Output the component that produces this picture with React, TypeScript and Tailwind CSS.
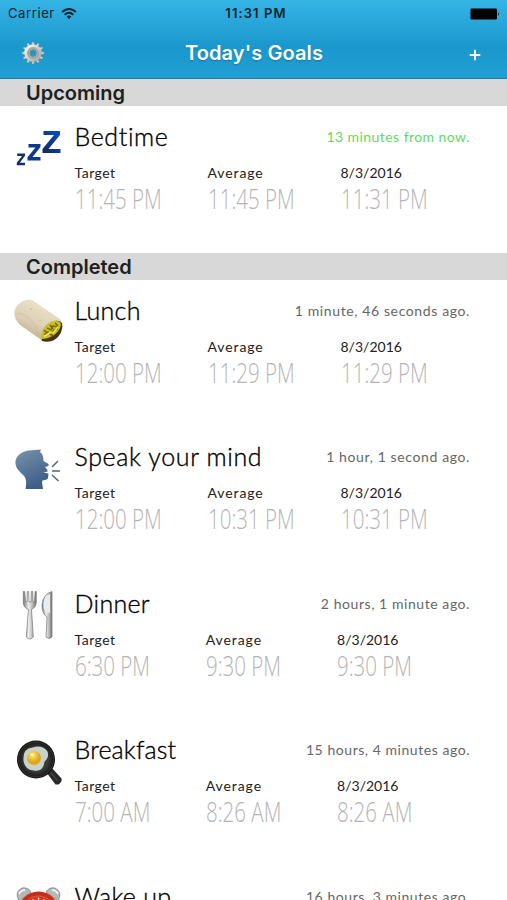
import React from 'react';

interface Goal {
  name: string;
  icon: React.ReactNode;
  when: string;
  upcoming?: boolean;
  narrow?: boolean;
  nameClass: string;
  whenClass: string;
  times: string[];
}

function GearIcon() {
  const teeth = Array.from({ length: 12 }, (_, i) => i * 30);
  return (
    <svg width="24" height="24" viewBox="0 0 24 24">
      <defs>
        <linearGradient id="gear" x1="0" y1="0" x2="1" y2="1">
          <stop offset="0" stopColor="#f3f3f1" />
          <stop offset="1" stopColor="#aaa9a7" />
        </linearGradient>
      </defs>
      <g fill="#d4d4d2" stroke="#77868c" strokeWidth="0.4">
        {teeth.map((angle) => (
          <path key={angle} d="M10.5 5 11.1.9H12.9L13.5 5Z" transform={`rotate(${angle} 12 12)`} />
        ))}
      </g>
      <circle cx="12" cy="12" r="6.2" fill="none" stroke="url(#gear)" strokeWidth="5" />
      <circle cx="12" cy="12" r="5" fill="none" stroke="#a4a4a3" strokeWidth="2" />
      <circle cx="12" cy="12" r="3" fill="#2597c7" stroke="#77878e" strokeWidth="0.7" />
    </svg>
  );
}

function WifiIcon() {
  return (
    <svg width="16" height="12" viewBox="0 0 16 12" fill="none" stroke="#07232f" strokeWidth="1.9">
      <path d="M1.2 4.2C5-.1 11-.1 14.8 4.2" />
      <path d="M3.7 6.8C6.2 4.1 9.8 4.1 12.3 6.8" />
      <path d="M5.7 8.6C7.1 7.2 8.9 7.2 10.3 8.6L8 11.2Z" fill="#07232f" stroke="none" />
    </svg>
  );
}

function BatteryIcon() {
  return (
    <svg width="30" height="12" viewBox="0 0 30 12">
      <rect x="0.5" y="0.5" width="26.5" height="11" rx="1.2" fill="#000" />
      <path d="M28 4Q29.8 6 28 8Z" fill="#000" />
    </svg>
  );
}

function SleepIcon() {
  return (
    <svg width="50" height="50" viewBox="0 0 50 50">
      <defs>
        <linearGradient id="zzz" x1="0" y1="1" x2="1" y2="0">
          <stop offset="0" stopColor="#12235c" />
          <stop offset="1" stopColor="#0751cf" />
        </linearGradient>
      </defs>
      <path d="M29.5 8H46V12L34.5 26H46.5V30H28.5V26L40 12H29.5Z" fill="url(#zzz)" />
      <path d="M14.5 21H26.5V24L18.5 34H26.5V37.5H13.5V34.3L21.5 24.5H14.5Z" fill="#10388f" />
      <path d="M3.2 30.5H11V32.7L5.8 39.8H11V42.3H2.8V39.7L8 32.9H3.2Z" fill="#152f6b" />
    </svg>
  );
}

function BurritoIcon() {
  return (
    <svg width="50" height="50" viewBox="0 0 50 50">
      <defs>
        <linearGradient id="wrap" x1="0.7" y1="0" x2="0.2" y2="1">
          <stop offset="0" stopColor="#efe5cf" />
          <stop offset="0.55" stopColor="#ddd0b5" />
          <stop offset="1" stopColor="#b3a280" />
        </linearGradient>
      </defs>
      <path d="M.5 14C2 7 10 2 18 3L46 22C52 31 41 46 29 44L6 28C2 24-.5 19 .5 14Z" fill="url(#wrap)" />
      <path d="M3 16C10 17 17 21 24 32" fill="none" stroke="#cbbd9f" strokeWidth="0.8" />
      <path d="M28 44C26 37 30 28 38 25Q44 22 48 26C50 35 42 48 28 44Z" fill="#46351b" />
      <path d="M27 42C26 35 31 27 39 24Q45 23 47 27C46 35 38 42 27 42Z" fill="#c0c529" />
      <path d="M30 38 34 35 37 38 40 33 44 32M33 31 37 33 39 29 43 30" fill="none" stroke="#667e16" strokeWidth="1.6" />
      <path d="M30 33 33 36M36 28 39 32M41 26 44 29M37 37 39 39" stroke="#b94322" strokeWidth="1.7" />
      <path d="M30 39.5 36 35.5 39 36 44 30" fill="none" stroke="#f1e83e" strokeWidth="1.6" />
      <circle cx="17" cy="12" r="0.7" fill="#b6a17d" />
      <circle cx="26" cy="23" r="0.6" fill="#b6a17d" />
    </svg>
  );
}

function SpeakingIcon() {
  return (
    <svg width="50" height="50" viewBox="0 0 50 50">
      <defs>
        <linearGradient id="head" x1="0" y1="0" x2="0.4" y2="1">
          <stop offset="0" stopColor="#7893ad" />
          <stop offset="1" stopColor="#3f5f88" />
        </linearGradient>
      </defs>
      <path
        d="M11.5 46C13 38 12 34 8 31C3 26 1 23 1.5 18C3 10 12 7 21 7L27 6.5L26 9C29 11 29.5 15 29.5 18L34.5 21V23L31 24L33.5 27V28.5L29.5 29.5L34.5 30.5L34 35C33 38 28 36 28 39L29 46Z"
        fill="url(#head)"
      />
      <path d="M38 24 44 18M38 28H46M38 32 44.5 38" stroke="#5a6570" strokeWidth="1.5" />
    </svg>
  );
}

function CutleryIcon() {
  return (
    <svg width="50" height="56" viewBox="0 0 50 56">
      <defs>
        <linearGradient id="steel" x1="0" y1="0" x2="1" y2="0">
          <stop offset="0" stopColor="#777" />
          <stop offset="0.4" stopColor="#eee" />
          <stop offset="0.7" stopColor="#bbb" />
          <stop offset="1" stopColor="#747474" />
        </linearGradient>
      </defs>
      <g transform="translate(0 -4)">
        <path
          d="M9.3 5.5H10.7L11.6 16H13L13.3 5.5H14.6L15 16H17L17.3 5.5H18.7L19.1 16H20.4L21.2 5.5H22.3V16Q22 21.5 17.5 23.5L19.3 51Q16 55 12.3 51L14.4 23.5Q9.3 21.5 9.3 16Z"
          fill="url(#steel)" stroke="#777" strokeWidth="0.7"
        />
        <path d="M38 5.5V51Q35 54 32 51L33 31Q28 28 28 19Q29 8 38 5.5Z" fill="url(#steel)" stroke="#777" strokeWidth="0.7" />
        <path d="M36 8V27Q29 27 29.5 18Q30 10 36 8Z" fill="#e8edef" />
      </g>
    </svg>
  );
}

function EggIcon() {
  return (
    <svg width="50" height="50" viewBox="0 0 50 50">
      <defs>
        <radialGradient id="pan">
          <stop offset="0.6" stopColor="#3c3c3b" />
          <stop offset="1" stopColor="#111" />
        </radialGradient>
        <radialGradient id="yolk" cx="0.4" cy="0.3">
          <stop offset="0" stopColor="#ffed79" />
          <stop offset="1" stopColor="#dea619" />
        </radialGradient>
      </defs>
      <g transform="translate(-0.5 1.5)">
        <path d="M33 35 38 30 48 41Q49 44 45 47L42 47Z" fill="#292929" />
        <path d="M37 35 44 43" stroke="#484848" strokeWidth="1.2" />
        <circle cx="22.5" cy="22" r="19" fill="url(#pan)" />
        <circle cx="22.5" cy="22" r="17.5" fill="none" stroke="#383836" strokeWidth="0.8" />
        <path d="M10 23Q9 11 19 10Q29 7 34 14Q36 20 31 24C30 32 26 34 20 33Q11 32 10 23Z" fill="#c9d1ca" />
        <circle cx="20.5" cy="20.5" r="7" fill="url(#yolk)" />
        <ellipse cx="18.5" cy="17" rx="2" ry="1.1" fill="#fff4aa" />
      </g>
    </svg>
  );
}

function AlarmIcon() {
  return (
    <svg width="50" height="50" viewBox="0 0 50 50">
      <g transform="translate(0 2)">
        <path d="M5 16Q0 7 8 3Q14 2 17 7ZM44 16Q49 7 41 3Q35 2 32 7Z" fill="#b7b9b8" stroke="#818484" strokeWidth="0.8" />
        <path d="M5 9Q7 5 11 5M44 9Q42 5 38 5" fill="none" stroke="#eee" strokeWidth="2" />
        <circle cx="24.5" cy="27" r="20.5" fill="#c92c16" />
        <circle cx="24.5" cy="28" r="17" fill="#cf3a24" stroke="#e2563f" strokeWidth="1" />
        <path d="M24.5 12.5V16M19 14 20 17M30 14 29 17" stroke="#f1c5b9" strokeWidth="1.4" />
      </g>
    </svg>
  );
}

const upcoming: Goal[] = [
  { name: 'Bedtime', icon: <SleepIcon />, when: '13 minutes from now.', upcoming: true, nameClass: 'tracking-[0.6px]', whenClass: 'tracking-[0.44px]', times: ['11:45 PM', '11:45 PM', '11:31 PM'] },
];

const completed: Goal[] = [
  { name: 'Lunch', icon: <BurritoIcon />, when: '1 minute, 46 seconds ago.', nameClass: 'tracking-[0.3px]', whenClass: 'tracking-[0.62px]', times: ['12:00 PM', '11:29 PM', '11:29 PM'] },
  { name: 'Speak your mind', icon: <SpeakingIcon />, when: '1 hour, 1 second ago.', nameClass: 'tracking-[0.63px]', whenClass: 'tracking-[0.62px]', times: ['12:00 PM', '10:31 PM', '10:31 PM'] },
  { name: 'Dinner', icon: <CutleryIcon />, when: '2 hours, 1 minute ago.', narrow: true, nameClass: 'tracking-[0.3px]', whenClass: 'tracking-[0.57px]', times: ['6:30 PM', '9:30 PM', '9:30 PM'] },
  { name: 'Breakfast', icon: <EggIcon />, when: '15 hours, 4 minutes ago.', narrow: true, nameClass: 'tracking-[0.15px]', whenClass: 'tracking-[0.55px]', times: ['7:00 AM', '8:26 AM', '8:26 AM'] },
  { name: 'Wake up', icon: <AlarmIcon />, when: '16 hours, 3 minutes ago.', narrow: true, nameClass: 'tracking-[0.3px]', whenClass: 'tracking-[0.55px]', times: ['7:00 AM', '7:27 AM', '7:27 AM'] },
];

const columns = [
  { label: 'Target', labelClass: 'tracking-[0.5px]' },
  { label: 'Average', labelClass: 'tracking-[0.9px]' },
  { label: '8/3/2016', labelClass: 'tracking-[0px]' },
];

function SectionHeader({ title }: { title: string }) {
  return (
    <h2 className="h-[27px] shrink-0 bg-[#d8d8d8] pl-[26px] font-['Inter',sans-serif] text-[20px] leading-[29px] font-semibold text-[#202020]">
      {title}
    </h2>
  );
}

function GoalRow({ goal }: { goal: Goal }) {
  return (
    <div className="flex h-[146.6px] shrink-0 font-['Lato',sans-serif]">
      <div className="w-[74.5px] shrink-0 pt-[17px] pl-[14px]">{goal.icon}</div>
      <div className="flex-1 pt-[14px]">
        <div className="flex h-[32px] items-center justify-between pr-[37px]">
          <h3 className={`text-[25px] leading-[32px] font-light whitespace-nowrap text-black [-webkit-text-stroke:0.35px_black] ${goal.nameClass}`}>
            {goal.name}
          </h3>
          <span className={`pt-px text-[14px] whitespace-nowrap ${goal.whenClass} ${goal.upcoming ? 'text-[#62d962]' : 'text-[#666]'}`}>
            {goal.when}
          </span>
        </div>
        <div className="flex pt-[11px]">
          {columns.map(({ label, labelClass }, i) => (
            <div key={label} className={`shrink-0 ${goal.narrow ? 'w-[131.3px]' : 'w-[133px]'}`}>
              <div className={`text-[14px] leading-[20px] text-[#222] ${labelClass}`}>{label}</div>
              <div className="origin-left scale-x-[0.76] font-['Open_Sans',sans-serif] text-[27px] leading-[32px] font-light whitespace-nowrap text-[#b4b4b4]">
                {goal.times[i]}
              </div>
            </div>
          ))}
        </div>
      </div>
    </div>
  );
}

function App() {
  return (
    <div className="flex h-[900px] w-full flex-col overflow-hidden bg-white">
      <header className="h-[79px] shrink-0 border-b border-[#217da3] bg-linear-to-b from-[#35b4e6] from-0% via-[#1a97cc] via-60% to-[#219fd3] font-['Inter',sans-serif]">
        <div className="grid h-[28px] grid-cols-3 items-center pr-[7px] pl-[8px] text-[13px] text-[#07232f]">
          <div className="flex items-center gap-[6px]">
            <span className="tracking-[0.6px]">Carrier</span>
            <WifiIcon />
          </div>
          <span className="pl-[4px] text-center font-semibold tracking-[1.1px] whitespace-nowrap">11:31 PM</span>
          <div className="flex justify-end">
            <BatteryIcon />
          </div>
        </div>
        <div className="grid h-[50px] grid-cols-3 items-center pr-[25px] pl-[21px] text-white">
          <button className="w-fit">
            <GearIcon />
          </button>
          <h1 className="pl-[5px] text-center text-[20px] font-semibold tracking-[0.1px] whitespace-nowrap text-shadow-sm">Today's Goals</h1>
          <button className="justify-self-end pt-[3px]" aria-label="Add goal">
            <svg width="14" height="14" viewBox="0 0 14 14" stroke="white" strokeWidth="1.8">
              <path d="M7 1.7V12.3M1.7 7H12.3" />
            </svg>
          </button>
        </div>
      </header>
      <SectionHeader title="Upcoming" />
      {upcoming.map((goal) => (
        <GoalRow key={goal.name} goal={goal} />
      ))}
      <SectionHeader title="Completed" />
      {completed.map((goal) => (
        <GoalRow key={goal.name} goal={goal} />
      ))}
    </div>
  );
}

export default App;
